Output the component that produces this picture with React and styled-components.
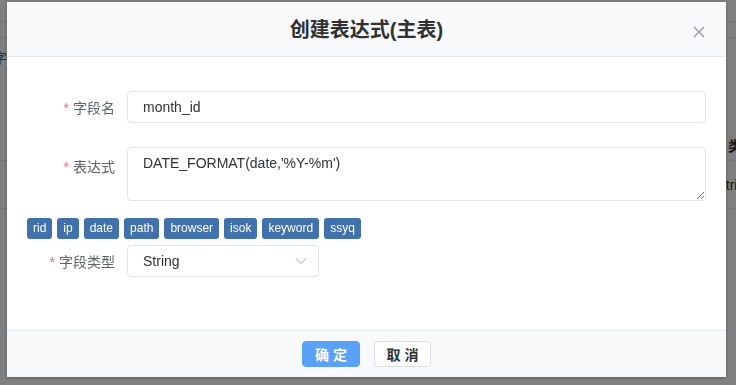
import React from "react";
import styled, { createGlobalStyle } from "styled-components";

const GlobalStyle = createGlobalStyle`
  html, body {
    margin: 0;
    padding: 0;
    width: 736px;
    height: 385px;
    overflow: hidden;
    font-family: "Liberation Sans", "Noto Sans CJK SC", sans-serif;
  }
  * { box-sizing: border-box; }
`;

const cjk = `"Liberation Sans", "Noto Sans CJK SC", sans-serif`;

/* ---------- page behind the dialog ---------- */

const Page = styled.div`
  width: 736px;
  height: 385px;
  background: #fff;
  display: flex;
  flex-direction: column;
`;

const PageRow = styled.div`
  height: ${p => p.h}px;
  flex: none;
  border-bottom: ${p => (p.line ? "1px solid #e6e6e6" : "none")};
  display: flex;
  align-items: center;
  justify-content: space-between;
  font-size: 14px;
  color: ${p => p.color || "#333"};
`;

const EdgeText = styled.span`
  font-family: ${cjk};
  font-size: 14px;
  font-weight: ${p => (p.bold ? 700 : 400)};
  margin: ${p => p.m || "0"};
`;

/* ---------- mask + dialog ---------- */

const Mask = styled.div`
  position: fixed;
  inset: 0;
  background: rgba(0, 0, 0, 0.5);
  display: flex;
  justify-content: center;
  align-items: flex-start;
  padding-top: 2px;
`;

const Dialog = styled.div`
  width: 719px;
  height: 375px;
  margin-left: -3px;
  background: #fff;
  display: flex;
  flex-direction: column;
  box-shadow: 0 1px 3px rgba(0, 0, 0, 0.3);
`;

const Header = styled.div`
  position: relative;
  height: 55px;
  flex: none;
  background: #f8f9fb;
  border-bottom: 1px solid #e8e9ec;
  display: flex;
  align-items: center;
  justify-content: center;
`;

const Title = styled.h3`
  margin: 0 0 2px;
  font-family: ${cjk};
  font-size: 20px;
  font-weight: 700;
  color: #303133;
`;

const Close = styled.button`
  position: absolute;
  right: 21px;
  top: 24px;
  width: 12px;
  height: 12px;
  padding: 0;
  border: none;
  background: none;
  display: flex;
  cursor: pointer;
`;

const Body = styled.div`
  flex: 1;
  padding: 34px 20px 0;
  display: flex;
  flex-direction: column;
`;

const FormItem = styled.div`
  display: flex;
  align-items: ${p => (p.top ? "flex-start" : "center")};
  margin-top: ${p => p.mt || 0}px;
`;

const Label = styled.label`
  width: 100px;
  flex: none;
  padding-right: 12px;
  padding-top: ${p => p.pt || 0}px;
  text-align: right;
  font-family: ${cjk};
  font-size: 14px;
  color: #606266;
  &::before {
    content: "*";
    color: #f56c6c;
    margin-right: 4px;
  }
`;

const Input = styled.input`
  flex: 1;
  height: 32px;
  border: 1px solid #e2e4ea;
  border-radius: 4px;
  padding: 0 15px;
  font-family: "Liberation Sans", sans-serif;
  font-size: 14px;
  color: #303133;
  outline: none;
  background: #fff;
`;

const TextArea = styled.textarea`
  flex: 1;
  height: 54px;
  border: 1px solid #e2e4ea;
  border-radius: 4px;
  padding: 5px 15px;
  line-height: 20px;
  font-family: "Liberation Sans", sans-serif;
  font-size: 14px;
  color: #303133;
  outline: none;
  resize: vertical;
`;

const Tags = styled.div`
  display: flex;
  gap: 5px;
  margin-top: 17px;
`;

const Tag = styled.span`
  height: 21px;
  padding: 0 6px;
  border-radius: 3px;
  background: #4071aa;
  color: #fff;
  font-family: "Liberation Sans", sans-serif;
  font-size: 12px;
  line-height: 21px;
`;

const Select = styled.div`
  width: 192px;
  height: 32px;
  border: 1px solid #e2e4ea;
  border-radius: 4px;
  padding: 0 11px 0 15px;
  display: flex;
  align-items: center;
  justify-content: space-between;
  font-family: "Liberation Sans", sans-serif;
  font-size: 14px;
  color: #303133;
`;

const Footer = styled.div`
  height: 47px;
  flex: none;
  background: #f8f9fb;
  border-top: 1px solid #e8e9ec;
  display: flex;
  align-items: center;
  justify-content: center;
  gap: 14px;
`;

const Button = styled.button`
  height: 26px;
  width: ${p => p.w}px;
  border-radius: 4px;
  border: 1px solid ${p => (p.primary ? "#5aa1f8" : "#dcdfe6")};
  background: ${p => (p.primary ? "#5aa1f8" : "#fff")};
  color: ${p => (p.primary ? "#fff" : "#303133")};
  font-family: ${cjk};
  font-size: 14px;
  font-weight: 600;
  padding: 0;
  cursor: pointer;
`;

const fields = ["rid", "ip", "date", "path", "browser", "isok", "keyword", "ssyq"];

const App = () => (
  <>
    <GlobalStyle />
    <Page>
      <PageRow h={22} line />
      <PageRow h={16} line />
      <PageRow h={38} color="#3c6db0">
        <EdgeText m="0 0 0 -7px">字</EdgeText>
      </PageRow>
      <PageRow h={54} />
      <PageRow h={31} line>
        <span />
        <EdgeText bold m="0 -6px 0 0">类</EdgeText>
      </PageRow>
      <PageRow h={48} line>
        <span />
        <EdgeText m="0 -17px 0 0">String</EdgeText>
      </PageRow>
    </Page>
    <Mask>
      <Dialog>
        <Header>
          <Title>创建表达式(主表)</Title>
          <Close aria-label="close">
            <svg width="12" height="12" viewBox="0 0 12 12">
              <path d="M1 1L11 11M11 1L1 11" stroke="#909399" strokeWidth="1.2" />
            </svg>
          </Close>
        </Header>
        <Body>
          <FormItem>
            <Label>字段名</Label>
            <Input value="month_id" readOnly />
          </FormItem>
          <FormItem top mt={24}>
            <Label pt={9}>表达式</Label>
            <TextArea value="DATE_FORMAT(date,'%Y-%m')" readOnly />
          </FormItem>
          <Tags>
            {fields.map(f => (
              <Tag key={f}>{f}</Tag>
            ))}
          </Tags>
          <FormItem mt={6}>
            <Label>字段类型</Label>
            <Select>
              <span>String</span>
              <svg width="12" height="8" viewBox="0 0 12 8">
                <path d="M1 1.5L6 6.5L11 1.5" fill="none" stroke="#c0c4cc" strokeWidth="1.1" />
              </svg>
            </Select>
          </FormItem>
        </Body>
        <Footer>
          <Button primary w={58}>确 定</Button>
          <Button w={57}>取 消</Button>
        </Footer>
      </Dialog>
    </Mask>
  </>
);

export default App;
